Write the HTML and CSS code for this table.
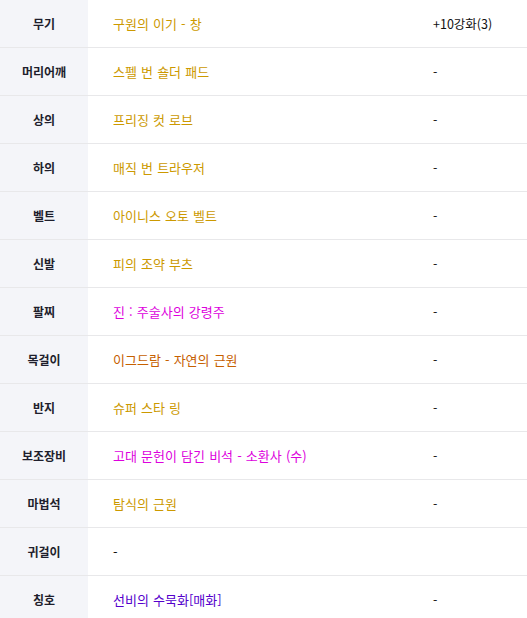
FILE: index.html
```html
<!DOCTYPE html>
<html lang="ko">
<head>
<meta charset="utf-8">
<link rel="stylesheet" href="styles.css">
</head>
<body>
<div class="table">
  <div class="row"><div class="th">무기</div><div class="item gold">구원의 이기 - 창</div><div class="extra">+10강화(3)</div></div>
  <div class="row"><div class="th">머리어깨</div><div class="item gold">스펠 번 숄더 패드</div><div class="extra">-</div></div>
  <div class="row"><div class="th">상의</div><div class="item gold">프리징 컷 로브</div><div class="extra">-</div></div>
  <div class="row"><div class="th">하의</div><div class="item gold">매직 번 트라우저</div><div class="extra">-</div></div>
  <div class="row"><div class="th">벨트</div><div class="item gold">아이니스 오토 벨트</div><div class="extra">-</div></div>
  <div class="row"><div class="th">신발</div><div class="item gold">피의 조약 부츠</div><div class="extra">-</div></div>
  <div class="row"><div class="th">팔찌</div><div class="item magenta">진 : 주술사의 강령주</div><div class="extra">-</div></div>
  <div class="row"><div class="th">목걸이</div><div class="item orange">이그드람 - 자연의 근원</div><div class="extra">-</div></div>
  <div class="row"><div class="th">반지</div><div class="item gold">슈퍼 스타 링</div><div class="extra">-</div></div>
  <div class="row"><div class="th">보조장비</div><div class="item magenta">고대 문헌이 담긴 비석 - 소환사 (수)</div><div class="extra">-</div></div>
  <div class="row"><div class="th">마법석</div><div class="item gold">탐식의 근원</div><div class="extra">-</div></div>
  <div class="row"><div class="th">귀걸이</div><div class="item plain">-</div><div class="extra"></div></div>
  <div class="row"><div class="th">칭호</div><div class="item purple">선비의 수묵화[매화]</div><div class="extra">-</div></div>
</div>
</body>
</html>
```

FILE: styles.css
```css
html, body {
  margin: 0;
  padding: 0;
  background: #ffffff;
}
body {
  font-family: "Noto Sans CJK KR", "Noto Sans", sans-serif;
  font-size: 12px;
  color: #111;
}
.table {
  display: flex;
  flex-direction: column;
  width: 527px;
}
.row {
  display: grid;
  grid-template-columns: 88px 345px 1fr;
  height: 47px;
  border-bottom: 1px solid #e8e8ea;
}
.row > div {
  display: flex;
  align-items: center;
  white-space: nowrap;
}
.th {
  justify-content: center;
  background: #f4f5f9;
  font-weight: 700;
  color: #1e1e2c;
}
.item {
  padding-left: 25px;
  font-size: 13px;
  word-spacing: 0.5px;
}
.extra {
  color: #111;
  font-size: 12.5px;
}
.gold { color: #cc9900; }
.orange { color: #c66000; }
.magenta { color: #dd00dd; }
.purple { color: #5500cc; }
.plain { color: #111; }
```
